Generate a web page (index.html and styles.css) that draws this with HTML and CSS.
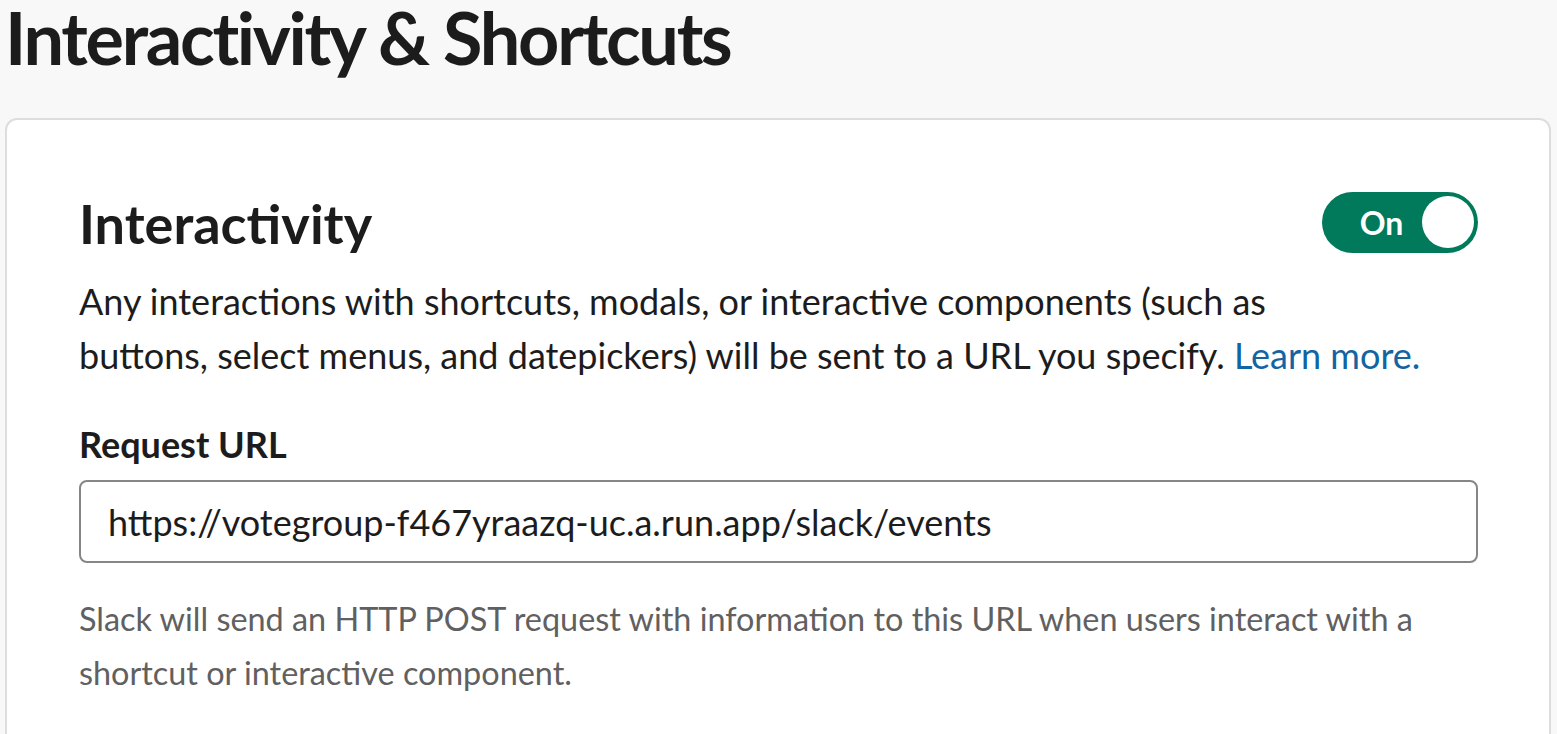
FILE: index.html
```html
<!DOCTYPE html>
<html lang="en">
<head>
<meta charset="utf-8">
<title>Interactivity &amp; Shortcuts</title>
<link rel="stylesheet" href="styles.css">
</head>
<body>
<main class="page">
  <h1 class="page-title">Interactivity &amp; Shortcuts</h1>
  <section class="card">
    <div class="card-head">
      <h2 class="section-title">Interactivity</h2>
      <button class="toggle" type="button" aria-pressed="true">
        <span class="toggle-label">On</span>
        <span class="toggle-knob"></span>
      </button>
    </div>
    <p class="lead">Any interactions with shortcuts, modals, or interactive components (such as<br>buttons, select menus, and datepickers) will be sent to a URL you specify. <a class="link" href="#">Learn more.</a></p>
    <label class="field-label" for="req-url">Request URL</label>
    <div class="input">
      <span class="input-text" id="req-url">https://votegroup-f467yraazq-uc.a.run.app/slack/events</span>
    </div>
    <p class="help">Slack will send an HTTP POST request with information to this URL when users interact with a shortcut or interactive component.</p>
  </section>
</main>
</body>
</html>
```

FILE: styles.css
```css
html, body {
  margin: 0;
  padding: 0;
}
body {
  background: #f8f8f8;
  font-family: Lato, "Noto Sans", sans-serif;
  color: #1d1c1d;
  overflow: hidden;
}
.page {
  padding: 0 6px 0 5px;
}
.page-title {
  margin: 0;
  font-size: 72px;
  font-weight: 700;
  line-height: 74px;
  letter-spacing: -2.3px;
  color: #1d1c1d;
}
.card {
  margin-top: 44px;
  background: #fff;
  border: 2px solid #dddddd;
  border-radius: 12px;
  padding: 72px 71px 120px 72px;
}
.card-head {
  display: flex;
  justify-content: space-between;
  align-items: center;
}
.section-title {
  margin: 0;
  font-size: 54px;
  font-weight: 700;
  line-height: 64px;
}
.toggle {
  display: flex;
  align-items: center;
  width: 156px;
  height: 61px;
  margin-top: -4px;
  padding: 0 4px 0 0;
  border: none;
  border-radius: 31px;
  background: #007a5a;
  color: #fff;
  font-family: inherit;
}
.toggle-label {
  flex: 1;
  text-align: center;
  font-size: 32px;
  font-weight: 700;
  padding-left: 19px;
}
.toggle-knob {
  width: 52px;
  height: 52px;
  border-radius: 50%;
  background: #fff;
}
.lead {
  margin: 18px 0 0;
  font-size: 36px;
  line-height: 54px;
}
.link {
  color: #1264a3;
  text-decoration: none;
}
.field-label {
  display: block;
  margin-top: 40px;
  font-size: 36px;
  font-weight: 700;
  line-height: 44px;
}
.input {
  box-sizing: border-box;
  margin-top: 14px;
  height: 83px;
  border: 2px solid #868686;
  border-radius: 8px;
  display: flex;
  align-items: center;
  padding: 0 27px;
}
.input-text {
  font-size: 36px;
  color: #1d1c1d;
}
.help {
  margin: 29px 0 0;
  font-size: 32.4px;
  line-height: 54px;
  color: #616061;
}
```
